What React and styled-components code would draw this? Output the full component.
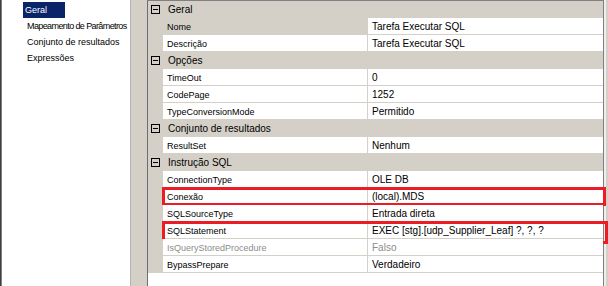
import React from 'react';
import styled, { createGlobalStyle } from 'styled-components';

const Global = createGlobalStyle`
  html, body { margin: 0; padding: 0; }
  body {
    width: 608px;
    height: 286px;
    overflow: hidden;
    background: #d4d0c8;
    font-family: "Liberation Sans", Arial, sans-serif;
  }
`;

const Frame = styled.div`
  display: flex;
  width: 608px;
  height: 286px;
  background: #d4d0c8;
`;

const Nav = styled.ul`
  box-sizing: border-box;
  list-style: none;
  margin: 0 16px 0 0;
  padding: 2px 0 0 22px;
  width: 131px;
  height: 286px;
  background: #ffffff;
  border-left: 1px solid #404040;
  box-shadow: inset 1px 0 0 #808080;
  border-right: 1px solid #b4b4b4;
`;

const NavItem = styled.li`
  height: 16px;
  line-height: 17px;
  font-size: 9px;
  white-space: nowrap;
`;

const NavLabel = styled.span`
  display: inline-block;
  height: 16px;
  padding: ${p => (p.$selected ? '0 18px 0 2px' : '0 2px 0 4px')};
  background: ${p => (p.$selected ? '#0a246a' : 'transparent')};
  color: ${p => (p.$selected ? '#ffffff' : '#000000')};
  letter-spacing: ${p => (p.$tight ? '-0.6px' : '0')};
`;

const Grid = styled.div`
  box-sizing: border-box;
  width: 457px;
  height: 286px;
  background: #ffffff;
  border-left: 1px solid #6e6e6e;
  border-top: 1px solid #808080;
  border-right: 1px solid #808080;
  box-shadow: 2px 0 0 #eeeeee;
`;

const CategoryRow = styled.div`
  display: grid;
  grid-template-columns: 15px 1fr;
  height: 17px;
  background: #d4d0c8;
`;

const Gutter = styled.div`
  display: flex;
  align-items: center;
  padding-left: 3px;
  background: #d4d0c8;
  height: 17px;
`;

const CategoryLabel = styled.div`
  padding-left: 5px;
  line-height: 18px;
  font-size: 10px;
  color: #000;
  white-space: nowrap;
`;

const PropRow = styled.div`
  position: relative;
  display: grid;
  grid-template-columns: 15px 205px 1fr;
  height: 17px;
`;

const NameCell = styled.div`
  box-sizing: border-box;
  height: 17px;
  padding-left: 4px;
  line-height: 18px;
  font-size: 9px;
  white-space: nowrap;
  overflow: hidden;
  background: ${p => (p.$selected ? '#d4d0c8' : '#ffffff')};
  color: ${p => (p.$disabled ? '#8c8c8c' : '#000000')};
  border-bottom: 1px solid #d4d0c8;
  border-right: 1px solid #d4d0c8;
`;

const ValueCell = styled.div`
  box-sizing: border-box;
  height: 17px;
  padding-left: 4px;
  line-height: 18px;
  font-size: 10px;
  white-space: nowrap;
  overflow: hidden;
  background: #ffffff;
  color: ${p => (p.$disabled ? '#8c8c8c' : '#000000')};
  border-bottom: 1px solid #d4d0c8;
`;

const Highlight = styled.span`
  position: absolute;
  box-sizing: border-box;
  left: 14px;
  right: ${p => p.$right}px;
  top: -1px;
  height: ${p => p.$h}px;
  border: 3px solid #ed1c24;
  pointer-events: none;
`;

const Minus = () => (
  <svg width="9" height="9" viewBox="0 0 9 9">
    <rect x="0.5" y="0.5" width="8" height="8" fill="none" stroke="#000" />
    <line x1="2" y1="4.5" x2="7" y2="4.5" stroke="#000" />
  </svg>
);

const navItems = [
  { label: 'Geral', selected: true },
  { label: 'Mapeamento de Parâmetros', tight: true },
  { label: 'Conjunto de resultados' },
  { label: 'Expressões' },
];

const sections = [
  {
    title: 'Geral',
    rows: [
      { name: 'Nome', value: 'Tarefa Executar SQL', selected: true },
      { name: 'Descrição', value: 'Tarefa Executar SQL' },
    ],
  },
  {
    title: 'Opções',
    rows: [
      { name: 'TimeOut', value: '0' },
      { name: 'CodePage', value: '1252' },
      { name: 'TypeConversionMode', value: 'Permitido' },
    ],
  },
  {
    title: 'Conjunto de resultados',
    rows: [{ name: 'ResultSet', value: 'Nenhum' }],
  },
  {
    title: 'Instrução SQL',
    rows: [
      { name: 'ConnectionType', value: 'OLE DB' },
      { name: 'Conexão', value: '(local).MDS', box: { h: 19, right: -3 } },
      { name: 'SQLSourceType', value: 'Entrada direta' },
      { name: 'SQLStatement', value: 'EXEC [stg].[udp_Supplier_Leaf] ?, ?, ?', box: { h: 23, right: -5 } },
      { name: 'IsQueryStoredProcedure', value: 'Falso', disabled: true },
      { name: 'BypassPrepare', value: 'Verdadeiro' },
    ],
  },
];

export default function App() {
  return (
    <>
      <Global />
      <Frame>
        <Nav>
          {navItems.map(item => (
            <NavItem key={item.label}>
              <NavLabel $selected={item.selected} $tight={item.tight}>
                {item.label}
              </NavLabel>
            </NavItem>
          ))}
        </Nav>
        <Grid>
          {sections.map(section => (
            <React.Fragment key={section.title}>
              <CategoryRow>
                <Gutter>
                  <Minus />
                </Gutter>
                <CategoryLabel>{section.title}</CategoryLabel>
              </CategoryRow>
              {section.rows.map(row => (
                <PropRow key={row.name}>
                  <Gutter />
                  <NameCell $selected={row.selected} $disabled={row.disabled}>
                    {row.name}
                  </NameCell>
                  <ValueCell $disabled={row.disabled}>{row.value}</ValueCell>
                  {row.box && <Highlight $h={row.box.h} $right={row.box.right} />}
                </PropRow>
              ))}
            </React.Fragment>
          ))}
        </Grid>
      </Frame>
    </>
  );
}
